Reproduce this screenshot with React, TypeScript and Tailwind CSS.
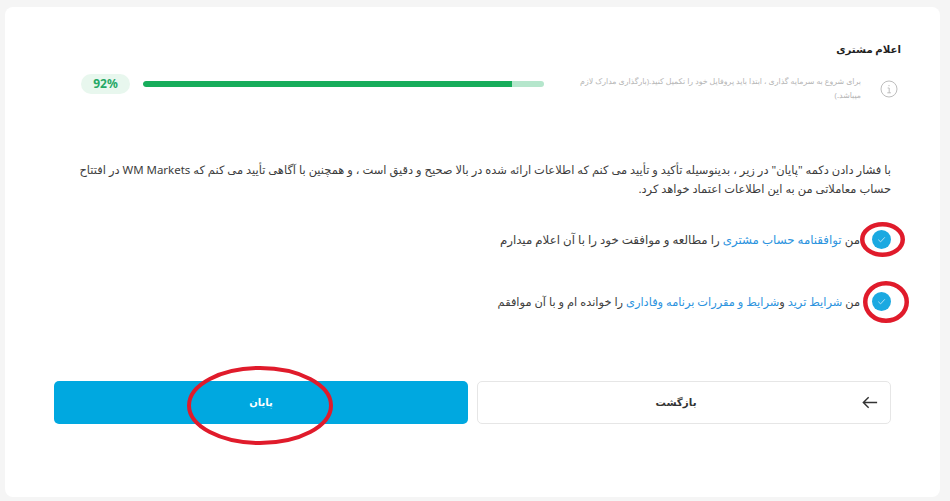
import React from "react";

function Check() {
  return (
    <span className="flex h-[19px] w-[19px] shrink-0 items-center justify-center rounded-full bg-[#1ba9e1]">
      <svg viewBox="0 0 12 12" className="h-[11px] w-[11px]" fill="none" stroke="#bfe6f6" strokeWidth="1">
        <path d="M2.5 6.2 5 8.6 9.6 3.6" />
      </svg>
    </span>
  );
}

function Ellipse({ w, h, sw, className }: { w: number; h: number; sw: number; className: string }) {
  return (
    <svg width={w} height={h} viewBox={`0 0 ${w} ${h}`} className={`pointer-events-none absolute ${className}`} fill="none">
      <ellipse cx={w / 2} cy={h / 2} rx={w / 2 - sw / 2} ry={h / 2 - sw / 2} stroke="#e01b2b" strokeWidth={sw} />
    </svg>
  );
}

export default function App() {
  return (
    <div dir="rtl" className="h-[501px] w-[950px] overflow-hidden bg-[#f5f5f5] pl-[5px] pr-[10px] pt-[7px] [font-family:'Noto_Sans','DejaVu_Sans',sans-serif]">
      <div className="relative h-[490px] w-[935px] rounded-lg bg-white pl-[49px] pr-[39px] pt-[34px]">
        <h1 className="text-[10.2px] font-bold leading-[16px] text-[#1f1f1f]">اعلام مشتری</h1>

        <div className="mt-[14px] flex h-[36px] items-start pr-[3px]">
          <svg viewBox="0 0 18 18" className="ml-[19px] mt-[9px] h-[18px] w-[18px] shrink-0" fill="none" stroke="#bdbdbd" strokeWidth="1">
            <circle cx="9" cy="9" r="8" />
            <path d="M9 5v1.2M7.6 8h1.6v4.8M7.3 12.8h3.6" />
          </svg>
          <p className="mt-[3px] w-[290px] shrink-0 text-[7.83px] leading-[14px] text-[#b5b5b5]">
            برای شروع به سرمایه گذاری ، ابتدا باید پروفایل خود را تکمیل کنید.(بارگذاری مدارک لازم میباشد.)
          </p>
          <div className="mr-[27px] mt-[10px] h-[6px] w-[401px] shrink-0 overflow-hidden rounded-full bg-[#b5e6cc]">
            <div className="mr-auto h-full w-[92%] rounded-l-full bg-[#17ad5b]" />
          </div>
          <span dir="ltr" className="mr-[13px] mt-[3px] flex h-[20px] w-[49px] shrink-0 items-center justify-center rounded-full bg-[#e8f7ee] text-[12px] font-bold text-[#25a866]">
            92%
          </span>
        </div>

        <p className="mr-[10px] mt-[53px] w-[815px] text-[11.46px] leading-[19px] text-[#3d3d3d]">
          با فشار دادن دکمه "پایان" در زیر ، بدینوسیله تأکید و تأیید می کنم که اطلاعات ارائه شده در بالا صحیح و دقیق است ، و همچنین با آگاهی تأیید می کنم که WM Markets در افتتاح حساب معاملاتی من به این اطلاعات اعتماد خواهد کرد.
        </p>

        <div className="mr-[10px] mt-[32px] flex h-[19px] items-center gap-[12px] text-[11.8px] text-[#3d3d3d]">
          <Check />
          <span>
            من <a className="text-[#2b93de]">توافقنامه حساب مشتری</a> را مطالعه و موافقت خود را با آن اعلام میدارم
          </span>
        </div>

        <div className="mr-[10px] mt-[43px] flex h-[19px] items-center gap-[12px] text-[11.4px] text-[#3d3d3d]">
          <Check />
          <span>
            من <a className="text-[#2b93de]">شرایط ترید</a> و<a className="text-[#2b93de]">شرایط و مقررات برنامه وفاداری</a> را خوانده ام و با آن موافقم
          </span>
        </div>

        <div className="mr-[10px] mt-[70px] grid w-[837px] grid-cols-2 gap-[9px]">
          <button className="relative flex h-[43px] items-center justify-center rounded-[5px] border border-[#e6e6e6] bg-white pr-[16px] text-[10.3px] font-bold text-[#333]">
            بازگشت
            <svg viewBox="0 0 18 14" className="absolute right-[12px] h-[13px] w-[16px]" fill="none" stroke="#333" strokeWidth="1.6">
              <path d="M17 7H1.5M7.5 1 1.5 7l6 6" />
            </svg>
          </button>
          <button className="flex h-[43px] items-center justify-center rounded-[5px] bg-[#00a8e0] text-[10px] font-bold text-white">
            پایان
          </button>
        </div>

        <Ellipse w={45} h={35} sw={4.5} className="left-[855px] top-[215px]" />
        <Ellipse w={46} h={42} sw={4.5} className="left-[858px] top-[274px]" />
        <Ellipse w={146} h={79} sw={4} className="left-[182px] top-[359px]" />
      </div>
    </div>
  );
}
